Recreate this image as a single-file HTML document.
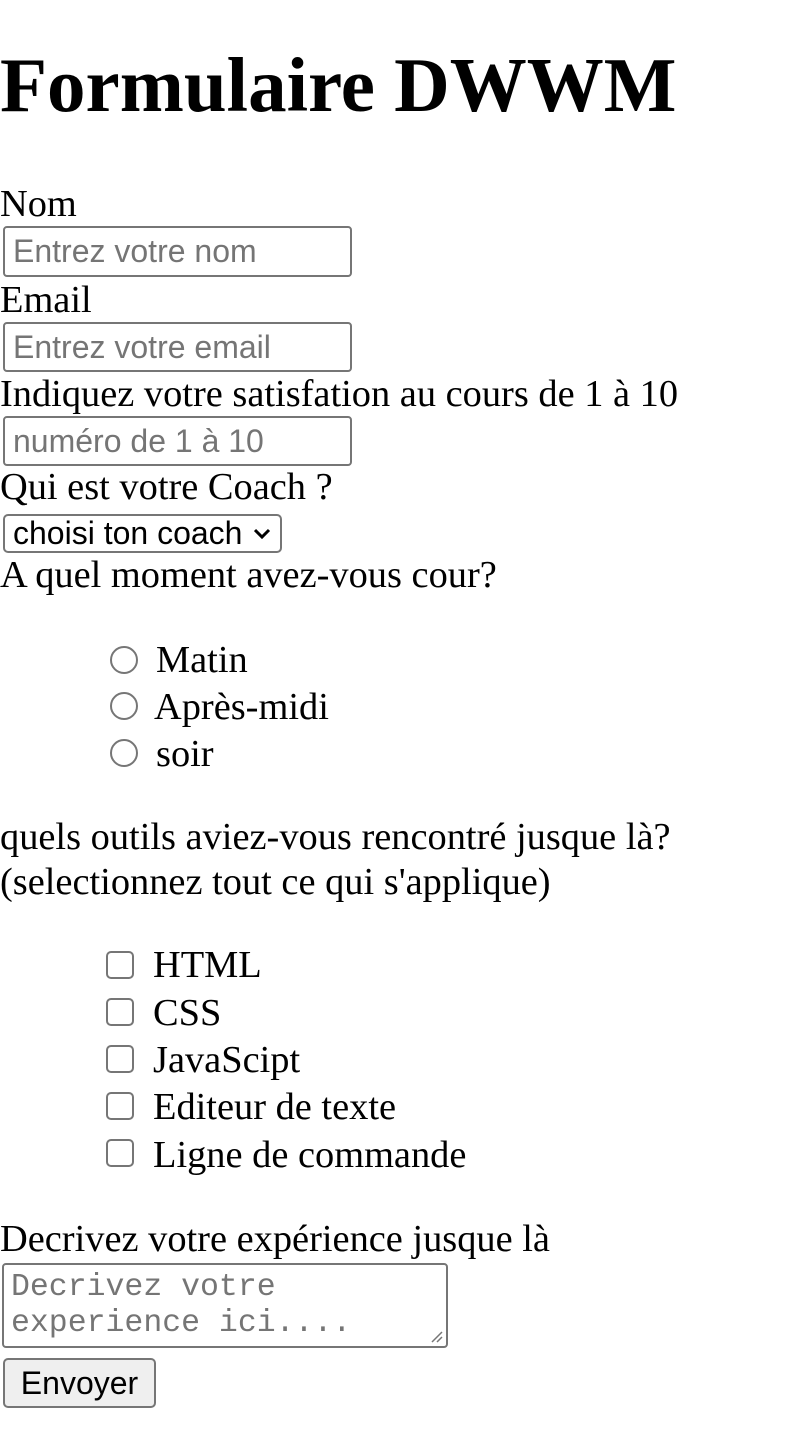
<!DOCTYPE html>
<html><head><meta charset="utf-8">
<style>
html,body{margin:0;padding:0;background:#fff;}
body{width:798px;height:1452px;position:relative;overflow:hidden;font-family:"Liberation Serif",serif;color:#000;}
.t{position:absolute;font-size:38.4px;line-height:1;white-space:nowrap;}
.h{position:absolute;left:0;top:47px;font-size:77px;font-weight:bold;line-height:1;white-space:nowrap;}
.in{position:absolute;left:3px;width:349px;height:51px;box-sizing:border-box;border:2px solid #767676;border-radius:4px;font-family:"Liberation Sans",sans-serif;font-size:32px;color:#757575;padding-left:8px;display:flex;align-items:center;white-space:nowrap;}
.sel{position:absolute;left:3px;top:514px;width:279px;height:39px;box-sizing:border-box;border:2px solid #767676;border-radius:5px;font-family:"Liberation Sans",sans-serif;font-size:32px;color:#000;padding-left:8px;display:flex;align-items:center;}
.r{position:absolute;left:110px;width:28px;height:28px;box-sizing:border-box;border:2px solid #767676;border-radius:50%;}
.c{position:absolute;left:106px;width:28px;height:28px;box-sizing:border-box;border:2px solid #767676;border-radius:5px;}
.ta{position:absolute;left:2px;top:1263px;width:446px;height:85px;box-sizing:border-box;border:2px solid #767676;border-radius:4px;font-family:"Liberation Mono",monospace;font-size:31.5px;line-height:36px;color:#757575;padding:5px 0 0 7px;white-space:pre;}
.btn{position:absolute;left:3px;top:1358px;width:153px;height:50px;box-sizing:border-box;border:2px solid #767676;border-radius:5px;background:#efefef;font-family:"Liberation Sans",sans-serif;font-size:32px;display:flex;align-items:center;justify-content:center;}
</style></head><body>
<div class="h">Formulaire DWWM</div>
<div class="t" style="left:0;top:185px">Nom</div>
<div class="in" style="top:226px">Entrez votre nom</div>
<div class="t" style="left:0;top:281px">Email</div>
<div class="in" style="top:322px;height:50px">Entrez votre email</div>
<div class="t" style="left:0;top:375px">Indiquez votre satisfation au cours de 1 à 10</div>
<div class="in" style="top:416px;height:50px">numéro de 1 à 10</div>
<div class="t" style="left:0;top:468px">Qui est votre Coach ?</div>
<div class="sel">choisi ton coach
<svg style="position:absolute;left:248px;top:12px" width="18" height="12" viewBox="0 0 18 12"><path d="M2 2 L9 9 L16 2" fill="none" stroke="#000" stroke-width="3"/></svg></div>
<div class="t" style="left:0;top:556px">A quel moment avez-vous cour?</div>
<div class="r" style="top:646px"></div><div class="t" style="left:156px;top:641px">Matin</div>
<div class="r" style="top:692px"></div><div class="t" style="left:154px;top:688px">Après-midi</div>
<div class="r" style="top:739px"></div><div class="t" style="left:156px;top:735px">soir</div>
<div class="t" style="left:0;top:818px">quels outils aviez-vous rencontré jusque là?</div>
<div class="t" style="left:0;top:863px">(selectionnez tout ce qui s'applique)</div>
<div class="c" style="top:951px"></div><div class="t" style="left:153px;top:946px">HTML</div>
<div class="c" style="top:998px"></div><div class="t" style="left:153px;top:994px">CSS</div>
<div class="c" style="top:1045px"></div><div class="t" style="left:153px;top:1041px">JavaScipt</div>
<div class="c" style="top:1092px"></div><div class="t" style="left:153px;top:1088px">Editeur de texte</div>
<div class="c" style="top:1139px"></div><div class="t" style="left:153px;top:1136px">Ligne de commande</div>
<div class="t" style="left:0;top:1220px">Decrivez votre expérience jusque là</div>
<div class="ta">Decrivez votre
experience ici....<svg style="position:absolute;right:3px;bottom:3px" width="14" height="14" viewBox="0 0 14 14"><path d="M13 3 L3 13 M13 8 L8 13" stroke="#767676" stroke-width="1.5"/></svg></div>
<div class="btn">Envoyer</div>
</body></html>
